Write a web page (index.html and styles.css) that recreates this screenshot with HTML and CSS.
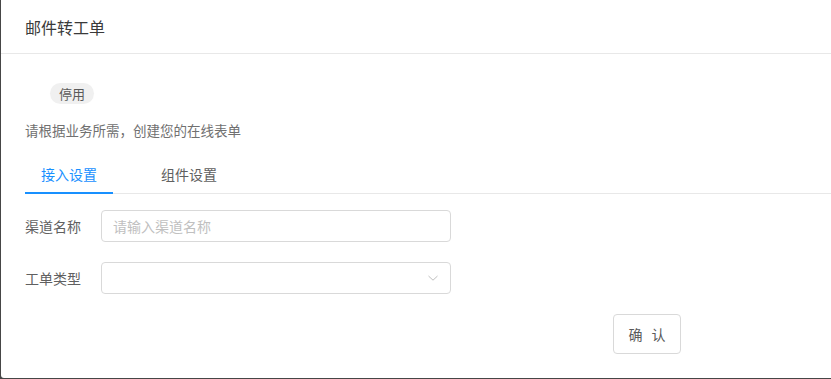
FILE: index.html
```html
<!DOCTYPE html>
<html lang="zh">
<head>
<meta charset="utf-8">
<link rel="stylesheet" href="styles.css">
</head>
<body>
<div class="modal">
  <div class="modal-header">
    <div class="modal-title">邮件转工单</div>
  </div>
  <div class="modal-body">
    <div class="status-row"><span class="tag">停用</span></div>
    <p class="desc">请根据业务所需，创建您的在线表单</p>
    <div class="tabs">
      <div class="tab active">接入设置</div>
      <div class="tab">组件设置</div>
    </div>
    <div class="form">
      <div class="form-row">
        <label class="label">渠道名称</label>
        <input class="input" type="text" placeholder="请输入渠道名称">
      </div>
      <div class="form-row">
        <label class="label">工单类型</label>
        <div class="select">
          <svg class="arrow" width="12" height="12" viewBox="0 0 12 12"><path d="M1.5 4 L6 8.2 L10.5 4" fill="none" stroke="#bfbfbf" stroke-width="1"/></svg>
        </div>
      </div>
      <div class="actions">
        <button class="btn" type="button">确 认</button>
      </div>
    </div>
  </div>
</div>
</body>
</html>
```

FILE: styles.css
```css
html, body {
  margin: 0;
  padding: 0;
  background: #464646;
  overflow: hidden;
}
body {
  font-family: "Noto Sans CJK SC", "Noto Sans", sans-serif;
  width: 831px;
  height: 379px;
}
.modal {
  margin-left: 1px;
  width: 830px;
  height: 378px;
  background: #fff;
  border-radius: 0 0 0 3px;
  overflow: hidden;
}
.modal-header {
  height: 53px;
  border-bottom: 1px solid #e8e8e8;
  display: flex;
  align-items: center;
  padding-left: 24px;
}
.modal-title {
  font-size: 16px;
  line-height: 22px;
  color: #3a3a3a;
}
.modal-body {
  padding-left: 24px;
}
.status-row {
  padding-top: 29px;
  padding-left: 25px;
  display: flex;
}
.tag {
  display: inline-block;
  height: 21px;
  line-height: 21px;
  padding: 0 9px;
  font-size: 13px;
  color: #5a5a5a;
  background: #f0f0f0;
  border-radius: 11px;
}
.desc {
  margin: 15px 0 0;
  font-size: 13.5px;
  line-height: 22px;
  color: #707070;
}
.tabs {
  margin-top: 12px;
  display: flex;
  border-bottom: 1px solid #e8e8e8;
}
.tab {
  padding: 10px 16px 7px;
  font-size: 14px;
  line-height: 22px;
  color: #606060;
  border-bottom: 2px solid transparent;
  margin-bottom: -1px;
}
.tab + .tab {
  margin-left: 32px;
}
.tab.active {
  color: #1890ff;
  border-bottom-color: #1890ff;
}
.form {
  width: 656px;
  padding-top: 16px;
}
.form-row {
  display: flex;
  align-items: center;
  height: 32px;
  margin-bottom: 20px;
}
.label {
  width: 76px;
  font-size: 14px;
  color: #606060;
  flex: none;
}
.input, .select {
  box-sizing: border-box;
  width: 350px;
  height: 32px;
  border: 1px solid #d9d9d9;
  border-radius: 4px;
  background: #fff;
  font-family: inherit;
  font-size: 14px;
  padding: 0 11px;
  color: #333;
  outline: none;
}
.input::placeholder {
  color: #c0c0c0;
}
.select {
  display: flex;
  align-items: center;
  justify-content: flex-end;
  padding-right: 11px;
}
.arrow {
  display: block;
}
.actions {
  display: flex;
  justify-content: flex-end;
}
.btn {
  box-sizing: border-box;
  width: 68px;
  height: 40px;
  border: 1px solid #d9d9d9;
  border-radius: 4px;
  background: #fff;
  font-family: inherit;
  font-size: 14px;
  letter-spacing: 3px;
  padding: 0 0 0 3px;
  color: #5a5a5a;
}
```
